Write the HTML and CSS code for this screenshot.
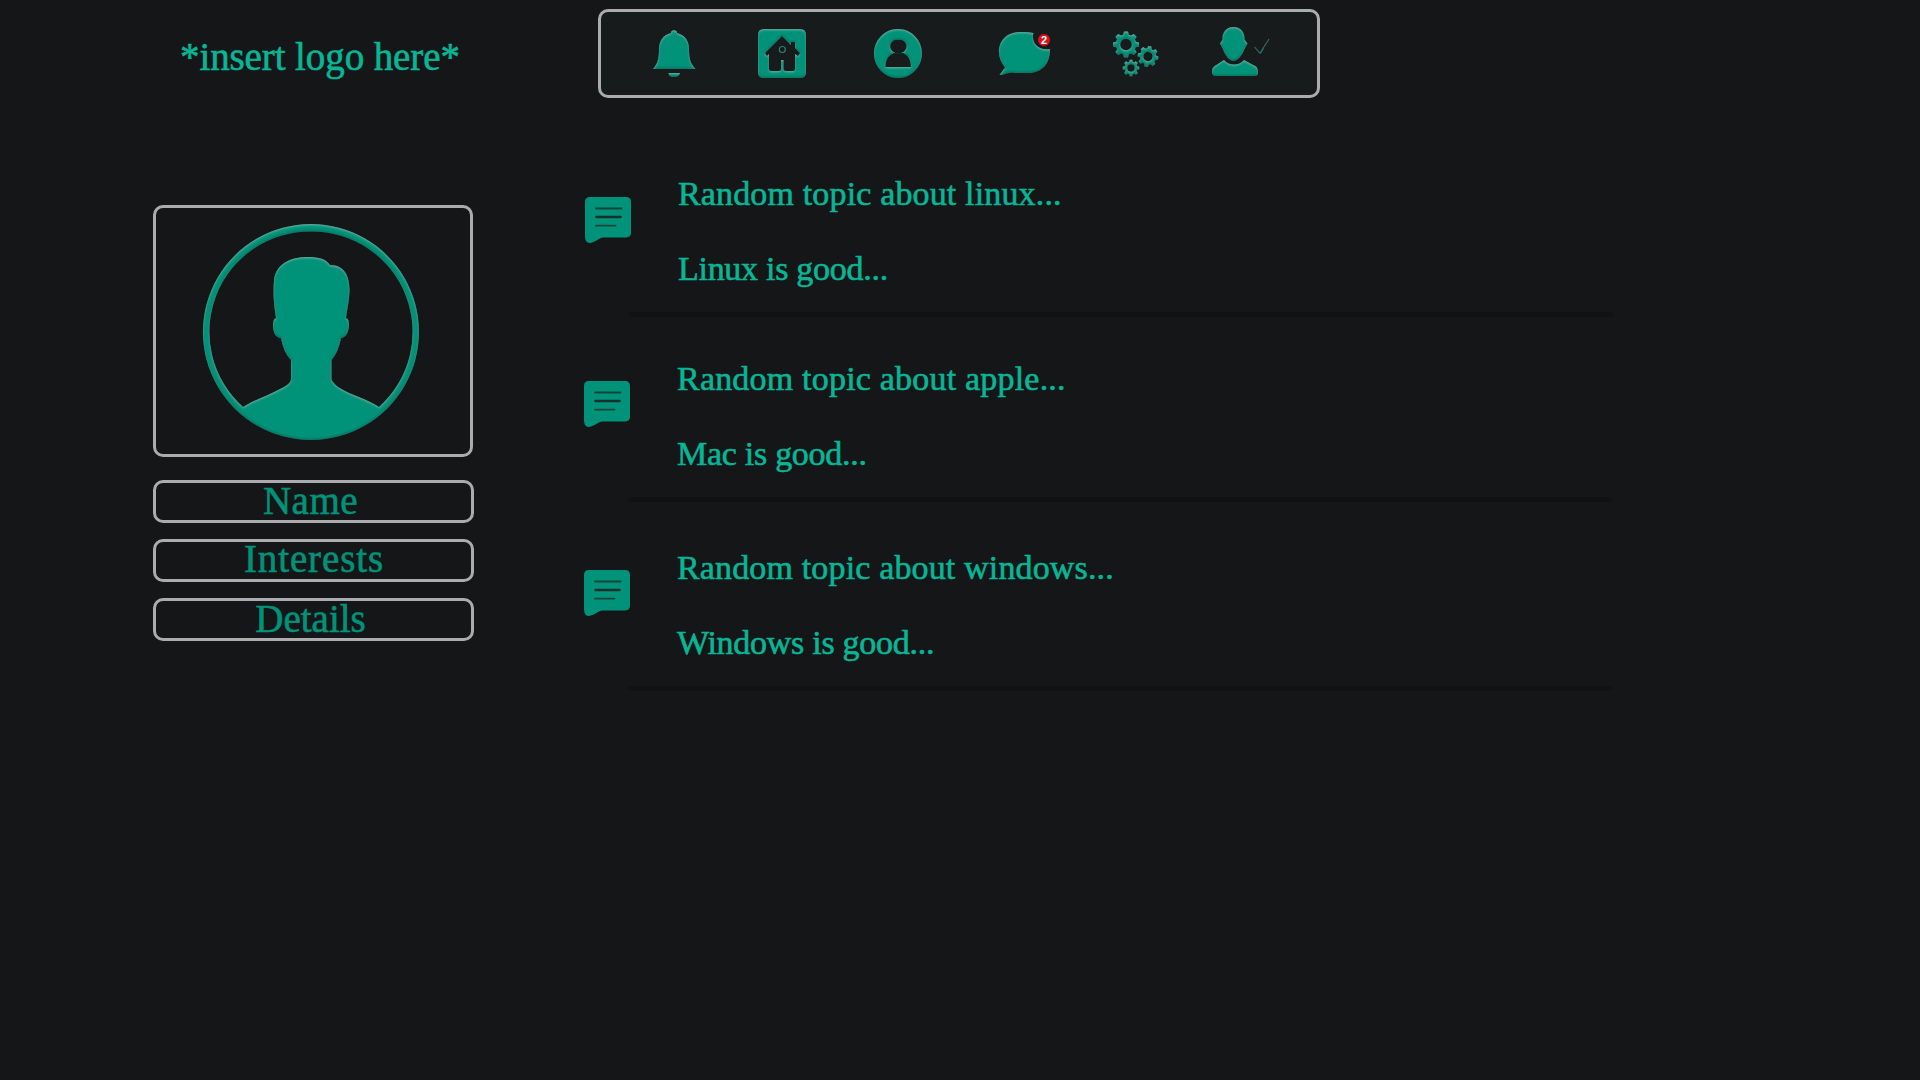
FILE: index.html
```html
<!DOCTYPE html>
<html lang="en">
<head>
<meta charset="utf-8">
<title>Forum</title>
<link rel="stylesheet" href="styles.css">
</head>
<body>
<svg class="defs" width="0" height="0" aria-hidden="true">
  <defs>
    <filter id="bevel" x="-10%" y="-10%" width="120%" height="120%" color-interpolation-filters="sRGB">
      <feGaussianBlur in="SourceAlpha" stdDeviation="0.9" result="soft"/>
      <feOffset in="soft" dy="1.3" result="down"/>
      <feComposite in="SourceAlpha" in2="down" operator="out" result="topEdge"/>
      <feFlood flood-color="#9dbab5" flood-opacity="0.75"/>
      <feComposite in2="topEdge" operator="in" result="light"/>
      <feOffset in="soft" dy="-1.3" result="up"/>
      <feComposite in="SourceAlpha" in2="up" operator="out" result="bottomEdge"/>
      <feFlood flood-color="#003a2f" flood-opacity="0.5"/>
      <feComposite in2="bottomEdge" operator="in" result="dark"/>
      <feMerge>
        <feMergeNode in="SourceGraphic"/>
        <feMergeNode in="dark"/>
        <feMergeNode in="light"/>
      </feMerge>
    </filter>
    <symbol id="note" viewBox="0 0 46 46">
      <path fill="#009379" d="M5 0H41Q46 0 46 5V36Q46 40 41 40.500H18C13 41.500 9 46 4.500 46Q0 46 0 39V5Q0 0 5 0Z"/>
      <path fill="none" stroke="#12443b" stroke-width="1.800" stroke-linecap="round" d="M11 11.500H36.500M11 28.700H30.500"/>
      <path fill="none" stroke="#18302d" stroke-width="2.500" stroke-linecap="round" d="M11.500 20H35.500"/>
    </symbol>
    <path id="tooth" d="M-.18-1.18H.18L.28-.8H-.28Z"/>
    <g id="gear">
      <circle r=".73" fill="none" stroke="#009379" stroke-width=".4"/>
      <g fill="#009379">
        <use href="#tooth"/><use href="#tooth" transform="rotate(45)"/><use href="#tooth" transform="rotate(90)"/><use href="#tooth" transform="rotate(135)"/><use href="#tooth" transform="rotate(180)"/><use href="#tooth" transform="rotate(225)"/><use href="#tooth" transform="rotate(270)"/><use href="#tooth" transform="rotate(315)"/>
      </g>
    </g>
  </defs>
</svg>

<header class="topbar">
  <div class="logo">*insert logo here*</div>
  <nav class="nav">
    <svg viewBox="601 12 126 83" aria-label="Notifications">
      <g filter="url(#bevel)" fill="#009379">
        <path d="M671 33Q671 30.300 674 30.300T677 33C685 35 689 41 689 49C689 60 691 64 695.500 69H653C657 64 659 60 659 49C659 41 663 35 671 33Z"/>
        <path d="M668.500 73H680Q679 77 674 77T668.500 73Z"/>
      </g>
    </svg>
    <svg viewBox="727 12 113 83" aria-label="Home">
      <path filter="url(#bevel)" fill="#009379" fill-rule="evenodd" d="M764 29H800Q806 29 806 35V72Q806 78 800 78H764Q758 78 758 72V35Q758 29 764 29ZM782 36L765 53L767 56L769 54V69Q769 71 771 71H779Q781 71 781 69V60H783.500V69Q783.500 71 786 71H793Q795 71 795 69V54L798 56L800 53L795 48V42H791V45Z"/>
      <circle cx="782.300" cy="49.500" r="3" fill="#161a1b" stroke="#2b8174" stroke-width="1.200"/>
    </svg>
    <svg viewBox="840 12 120 83" aria-label="Profile">
      <path filter="url(#bevel)" fill="#009379" fill-rule="evenodd" d="M898 29A24 24.500 0 1 1 897.900 29ZM898.500 40A6.500 6.500 0 0 0 895 52.700C889 54 885 60 885.500 67H911C911 60 908 54 901.500 52.700A6.500 6.500 0 0 0 898.500 40Z"/>
      <path stroke="#12332e" d="M893 53.400H904"/>
    </svg>
    <div class="nav-chat">
      <svg viewBox="960 12 120 83" aria-label="Messages">
        <path filter="url(#bevel)" fill="#009379" d="M1033.500 33C1031 41 1037 51 1050 49C1050 64 1042 73 1028 73H1015C1009 71 1005 75 999.500 75L1005 67.500C993 54 999 32 1020 32Q1027 31.500 1033.500 33Z"/>
      </svg>
      <span class="badge">2</span>
    </div>
    <svg viewBox="1080 12 105 83" aria-label="Settings">
      <g filter="url(#bevel)">
        <use href="#gear" transform="translate(1126 44.500) scale(11)"/>
        <use href="#gear" transform="translate(1148 56.500) rotate(10) scale(8.800)"/>
        <use href="#gear" transform="translate(1131 68) scale(7)"/>
      </g>
    </svg>
    <svg viewBox="1185 12 132 83" aria-label="Account">
      <g filter="url(#bevel)" fill="#009379">
        <path d="M1233.500 27C1241 27 1245 33 1244.500 39.500L1247.500 43.500L1244.500 49C1242 56 1237 61 1233.500 61S1225 56 1223 49L1220 43.500L1222.500 39.500C1222 33 1226 27 1233.500 27Z"/>
        <path d="M1224 60C1229 66 1239 66 1244 60L1256 66.500Q1258 68 1258 73Q1258 76 1254 76H1216Q1212 76 1212 72Q1212 68 1214 66.500Z"/>
      </g>
      <path fill="none" stroke="#3e6a60" stroke-width="1.100" d="M1254.500 47L1260 53L1269 39"/>
      <path fill="none" stroke="#05765f" d="M1258 51.500L1260.500 53.500L1264 48"/>
    </svg>
  </nav>
</header>

<main class="content">
  <aside class="sidebar">
    <div class="avatar">
      <svg viewBox="156 208 314 246" aria-label="Avatar">
        <g filter="url(#bevel)">
          <path fill="#009379" fill-rule="evenodd" d="M311 224A108 108 0 1 1 310.900 224ZM311 231.500A100.500 100.500 0 0 0 243 407C256 399 270 395 284 387Q291 383 291 379V360C286 355 283 348 281 338C275 338 273 331 273 325Q273 319 276 318C273.500 302 273 292 274 280C276 264 290 257 308 257C319 257 326 259 330 265C345 265 350 277 349.500 292C349 302 347 310 346 318Q349 319 349 325C349 331 346 338 341 338C339 348 336 355 331.500 360V379Q332 382 338 387C350 395 368 399 379 407A100.500 100.500 0 0 0 311 231.500Z"/>
        </g>
      </svg>
    </div>
    <div class="field field-name"><span>Name</span></div>
    <div class="field field-interests"><span>Interests</span></div>
    <div class="field field-details"><span>Details</span></div>
  </aside>

  <section class="topics">
    <article class="topic topic-first">
      <svg class="note"><use href="#note"/></svg>
      <div class="topic-text">
        <h2>Random topic about linux...</h2>
        <p>Linux is good...</p>
      </div>
      <div class="divider"></div>
    </article>
    <article class="topic">
      <svg class="note"><use href="#note"/></svg>
      <div class="topic-text">
        <h2 class="wide">Random topic about apple...</h2>
        <p>Mac is good...</p>
      </div>
      <div class="divider"></div>
    </article>
    <article class="topic topic-last">
      <svg class="note"><use href="#note"/></svg>
      <div class="topic-text">
        <h2>Random topic about windows...</h2>
        <p>Windows is good...</p>
      </div>
      <div class="divider"></div>
    </article>
  </section>
</main>
</body>
</html>
```
FILE: styles.css
```css
* {
  box-sizing: border-box;
}

body {
  margin: 0;
  height: 1080px;
  overflow: hidden;
  background: #141617;
  color: #08b697;
  font-family: "Liberation Serif", serif;
}

.defs {
  display: block;
  height: 0;
}

svg {
  display: block;
}

.topbar {
  display: flex;
  height: 98px;
  padding-top: 9px;
}

.logo {
  width: 598px;
  padding: 25px 0 0 180px;
  font-size: 39px;
  line-height: 46px;
  letter-spacing: -0.1px;
  -webkit-text-stroke: 0.6px;
}

.nav {
  display: grid;
  grid-template-columns: 126px 113px 120px 120px 105px 132px;
  width: 722px;
  height: 89px;
  border: 3px solid #acacae;
  border-radius: 10px;
  background: #181b1c;
}

.nav svg {
  width: 100%;
  height: 83px;
}

.nav-chat {
  position: relative;
}

.badge {
  position: absolute;
  left: 78px;
  top: 22px;
  width: 12px;
  height: 12px;
  border-radius: 50%;
  background: #e00f1a;
  color: #fff;
  font: bold 11px/12px "Liberation Sans", sans-serif;
  text-align: center;
}

.content {
  display: flex;
  padding-left: 153px;
}

.sidebar {
  display: flex;
  flex-direction: column;
  gap: 16px;
  width: 321px;
  padding-top: 107px;
  color: #009379;
}

.avatar {
  width: 320px;
  height: 252px;
  margin-bottom: 7px;
  border: 3px solid #acacae;
  border-radius: 10px;
}

.avatar svg {
  width: 314px;
  height: 246px;
}

.field {
  height: 43px;
  border: 3px solid #acacae;
  border-radius: 10px;
  font-size: 39px;
  line-height: 36px;
  text-align: center;
  -webkit-text-stroke: 0.6px;
}

.field-name {
  padding-right: 6px;
  letter-spacing: 0.5px;
}

.field-interests {
  padding-left: 1px;
  line-height: 33px;
  letter-spacing: 0.9px;
}

.field-details {
  padding-right: 6px;
}

.topics {
  display: flex;
  flex-direction: column;
  width: 1028px;
  margin-left: 110px;
  padding-top: 58px;
}

.topic {
  display: grid;
  grid-template-columns: 46px 1fr;
  column-gap: 47px;
  margin-bottom: 28px;
}

.topic-first {
  width: 1029px;
  padding-left: 1px;
  margin-bottom: 24px;
}

.note {
  width: 46px;
  height: 46px;
  margin-top: 40px;
}

.topic-first .note {
  margin-top: 41px;
}

.topic h2,
.topic p {
  margin: 0;
  font-size: 34px;
  font-weight: 400;
  line-height: 75px;
  letter-spacing: 0.15px;
  -webkit-text-stroke: 0.6px;
}

.topic h2.wide {
  letter-spacing: 0.2px;
}

.topic p {
  letter-spacing: -0.28px;
}

.divider {
  grid-column: 1 / -1;
  height: 5px;
  margin: 6px 0 0 44px;
  border-radius: 3px;
  background: #111214;
}
```
